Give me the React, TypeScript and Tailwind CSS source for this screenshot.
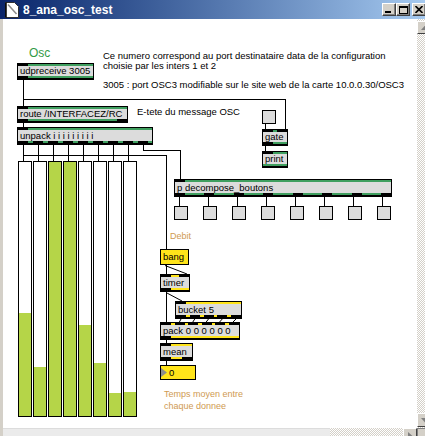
import type { ReactNode } from 'react';

const GREEN = 'bg-[#3f9f5f]';
const YELLOW = 'bg-[#ffe41a]';

function PortRow({ count, side, stripe, extra = '' }: { count: number; side: 'top' | 'bottom'; stripe: string; extra?: string }) {
  return (
    <div
      className={`absolute left-0 right-0 flex h-[2px] ${side === 'top' ? 'top-0' : 'bottom-0'} ${stripe} ${
        count > 1 ? 'justify-between' : 'justify-start'
      } ${extra}`}
    >
      {Array.from({ length: count }, (_, i) => (
        <span key={i} className="h-full w-[10px] bg-black" />
      ))}
    </div>
  );
}

type BoxProps = {
  className: string;
  label: string;
  stripe: string;
  inlets: number;
  outlets: number;
  outletsClass?: string;
};

function ObjBox({ className, label, stripe, inlets, outlets, outletsClass }: BoxProps) {
  return (
    <div className={`absolute flex items-center border border-b-2 border-black bg-[#dcdcdc] pl-[2px] ${className}`}>
      <PortRow count={inlets} side="top" stripe={stripe} />
      <span className="whitespace-nowrap text-[9.5px] leading-none text-black">{label}</span>
      <PortRow count={outlets} side="bottom" stripe={stripe} extra={outletsClass} />
    </div>
  );
}

function Comment({ className, children }: { className: string; children: ReactNode }) {
  return <div className={`absolute whitespace-nowrap ${className}`}>{children}</div>;
}

const sliderFill = [103, 49, 254, 254, 91, 53, 23, 24];

function TitleButton({ children, className = '' }: { children: ReactNode; className?: string }) {
  return (
    <div
      className={`flex h-[13px] w-[14px] items-center justify-center border border-t-white border-l-white border-r-[#404040] border-b-[#404040] bg-[#d4d0c8] shadow-[inset_-1px_-1px_#808080] ${className}`}
    >
      {children}
    </div>
  );
}

function TitleBar() {
  return (
    <div className="flex h-[19px] shrink-0 items-center bg-linear-to-r from-[#0a246a] to-[#a6caf0] pl-[5px]">
      <svg width="14" height="16" viewBox="0 0 14 16">
        <path d="M0.5 0.5H9.5L13.5 4.5V15.5H0.5Z" fill="white" stroke="#303030" />
        <path d="M1 0.5V15.5" stroke="black" strokeWidth="1.5" />
        <path d="M3 2.5L11.5 12" stroke="#8a8a8a" strokeWidth="1.5" />
      </svg>
      <span className="ml-[4px] text-[12px] font-bold leading-none text-white">8_ana_osc_test</span>
      <div className="ml-auto mr-[-1px] flex items-center">
        <TitleButton>
          <span className="mt-[5px] mr-[2px] h-[2px] w-[6px] bg-black" />
        </TitleButton>
        <TitleButton>
          <span className="h-[8px] w-[9px] border border-t-2 border-black" />
        </TitleButton>
        <TitleButton className="ml-[2px]">
          <svg width="8" height="7" viewBox="0 0 8 7">
            <path d="M0.5 0L7.5 7M7.5 0L0.5 7" stroke="black" strokeWidth="1.6" />
          </svg>
        </TitleButton>
      </div>
    </div>
  );
}

const CHECKER = 'bg-[repeating-conic-gradient(#d4d0c8_0_25%,#ffffff_0_50%)] bg-[length:2px_2px]';

function VScroll() {
  return (
    <div className={`flex w-[8px] shrink-0 flex-col overflow-hidden ${CHECKER}`}>
      <div className="mt-[2px] h-[13px] w-[16px] shrink-0 border border-t-white border-l-white border-b-[#404040] bg-[#d4d0c8] pl-[3px] pt-[3px]">
        <svg width="9" height="5" viewBox="0 0 9 5">
          <path d="M4.5 0L9 5H0Z" fill="#808080" />
        </svg>
      </div>
      <div className="flex-1" />
      <div className="mb-[1px] h-[14px] w-[16px] shrink-0 border border-t-white border-l-white border-b-[#404040] bg-[#d4d0c8] pl-[3px] pt-[4px]">
        <svg width="9" height="5" viewBox="0 0 9 5">
          <path d="M0 0H9L4.5 5Z" fill="#808080" />
        </svg>
      </div>
    </div>
  );
}

function HScroll() {
  return (
    <div className="flex h-[8px] shrink-0 overflow-hidden">
      <div className="w-[3px] bg-[#d4d0c8]" />
      <div className="w-[327px] border-t border-[#dcdcdc] bg-[#ebebeb]" />
      <div className={`flex-1 ${CHECKER}`} />
      <div className="h-[16px] w-[14px] border border-t-white border-l-white border-r-[#404040] bg-[#d4d0c8] pl-[4px] pt-[3px]">
        <svg width="5" height="9" viewBox="0 0 5 9">
          <path d="M0 0L5 4.5L0 9Z" fill="#808080" />
        </svg>
      </div>
      <div className="w-[8px] border-t border-l border-[#808080] bg-[#d4d0c8]" />
    </div>
  );
}

function Cords() {
  const bucketOut = [178, 191.75, 205.5, 219.25, 233];
  const packIn = [176.4, 189.8, 203.2, 216.6, 230];
  return (
    <svg className="absolute left-0 top-0" width={414} height={409} fill="none" stroke="black" strokeWidth={1} shapeRendering="crispEdges">
      <path d="M20.5 61V87" />
      <path d="M20.5 80.5H282.5V110" />
      <path d="M20.5 104V108" />
      <path d="M262.5 105V110" />
      <path d="M262.5 127V132" />
      {sliderFill.map((_, i) => (
        <path key={i} d={`M${20.5 + 15 * i} 126V142`} />
      ))}
      <path d="M20.5 126V136.5H163.5V230" />
      <path d="M140.5 126V131.5H177.5V160" />
      {Array.from({ length: 8 }, (_, i) => (
        <path key={i} d={`M${176.5 + 29 * i} 178V187`} />
      ))}
      <path d="M163.5 246V255" />
      <path d="M162 246.5L184 255" shapeRendering="auto" />
      <path d="M163.5 273V303" />
      <path d="M163 273.5L179 282" shapeRendering="auto" />
      {bucketOut.map((x, i) => (
        <path key={i} d={`M${x} 300L${packIn[i]} 303`} shapeRendering="auto" />
      ))}
      <path d="M163.5 321V324" />
      <path d="M163.5 342V346" />
    </svg>
  );
}

function Patch() {
  return (
    <div className="relative flex-1 overflow-hidden bg-white">
      <Cords />

      <Comment className="left-[26px] top-[28px] text-[12px] leading-none text-[#339a45]">Osc</Comment>
      <Comment className="left-[100px] top-[32px] text-[9.5px] leading-[10px] text-black">
        Ce numero correspond au port destinataire data de la configuration
        <br />
        choisie par les inters 1 et 2
      </Comment>
      <Comment className="left-[100px] top-[61px] text-[9.5px] leading-none text-black">
        3005 : port OSC3 modifiable sur le site web de la carte 10.0.0.30/OSC3
      </Comment>
      <Comment className="left-[134px] top-[88px] text-[9.5px] leading-none text-black">E-tete du message OSC</Comment>

      <ObjBox className="left-[14px] top-[44px] h-[17px] w-[77px]" label="udpreceive 3005" stripe={GREEN} inlets={1} outlets={1} />
      <ObjBox className="left-[14px] top-[87px] h-[17px] w-[111px]" label="route /INTERFACEZ/RC" stripe={GREEN} inlets={1} outlets={2} />
      <ObjBox
        className="left-[14px] top-[108px] h-[18px] w-[136px]"
        label="unpack i i i i i i i i i"
        stripe={GREEN}
        inlets={1}
        outlets={9}
        outletsClass="pr-[4px]"
      />

      <div className="absolute left-[259px] top-[91px] h-[14px] w-[14px] border border-black bg-[#dcdcdc]" />
      <ObjBox className="left-[259px] top-[110px] h-[17px] w-[26px]" label="gate" stripe={GREEN} inlets={2} outlets={1} />
      <ObjBox className="left-[259px] top-[132px] h-[17px] w-[26px]" label="print" stripe={GREEN} inlets={1} outlets={0} />

      <div className="absolute left-[15px] top-[142px] flex gap-[1px]">
        {sliderFill.map((h, i) => (
          <div key={i} className="relative h-[256px] w-[14px] border border-black bg-white">
            <div className="absolute bottom-0 left-0 right-0 bg-[#b5d548]" style={{ height: h }} />
          </div>
        ))}
      </div>

      <ObjBox className="left-[171px] top-[160px] h-[18px] w-[218px]" label="p decompose_boutons" stripe={GREEN} inlets={1} outlets={8} />
      <div className="absolute left-[171px] top-[187px] flex gap-[15px]">
        {Array.from({ length: 8 }, (_, i) => (
          <div key={i} className="h-[14px] w-[14px] border border-black bg-[#dcdcdc]" />
        ))}
      </div>

      <Comment className="left-[167px] top-[213px] text-[9px] leading-none text-[#cf9a52]">Debit</Comment>

      <div className="absolute left-[157px] top-[230px] flex h-[16px] w-[29px] items-center border border-black bg-[#ffe41a] pl-[2px]">
        <span className="text-[9.5px] leading-none text-black">bang</span>
      </div>
      <ObjBox className="left-[157px] top-[255px] h-[18px] w-[30px]" label="timer" stripe={YELLOW} inlets={2} outlets={1} />
      <ObjBox className="left-[172px] top-[282px] h-[18px] w-[67px]" label="bucket 5" stripe={YELLOW} inlets={1} outlets={5} />
      <ObjBox className="left-[157px] top-[303px] h-[18px] w-[80px]" label="pack 0 0 0 0 0 0" stripe={YELLOW} inlets={6} outlets={1} />
      <ObjBox className="left-[157px] top-[324px] h-[18px] w-[33px]" label="mean" stripe={YELLOW} inlets={1} outlets={2} />

      <div className="absolute left-[157px] top-[346px] flex h-[15px] w-[36px] items-center border border-black bg-[#ffe41a]">
        <svg width="7" height="9" viewBox="0 0 7 9" className="shrink-0">
          <path d="M0 0L6 4.5L0 9Z" fill="#8c8c8c" />
        </svg>
        <span className="ml-[1px] text-[9.5px] leading-none text-black">0</span>
      </div>

      <Comment className="left-[161px] top-[369px] text-[9px] leading-[12px] text-[#cf9a52]">
        Temps moyen entre
        <br />
        chaque donnee
      </Comment>
    </div>
  );
}

export default function App() {
  return (
    <div className="flex h-[436px] w-[425px] flex-col overflow-hidden bg-white font-['Liberation_Sans',Arial,sans-serif]">
      <TitleBar />
      <div className="flex min-h-0 flex-1">
        <div className="w-[3px] shrink-0 bg-[#d4d0c8]" />
        <Patch />
        <VScroll />
      </div>
      <HScroll />
    </div>
  );
}
